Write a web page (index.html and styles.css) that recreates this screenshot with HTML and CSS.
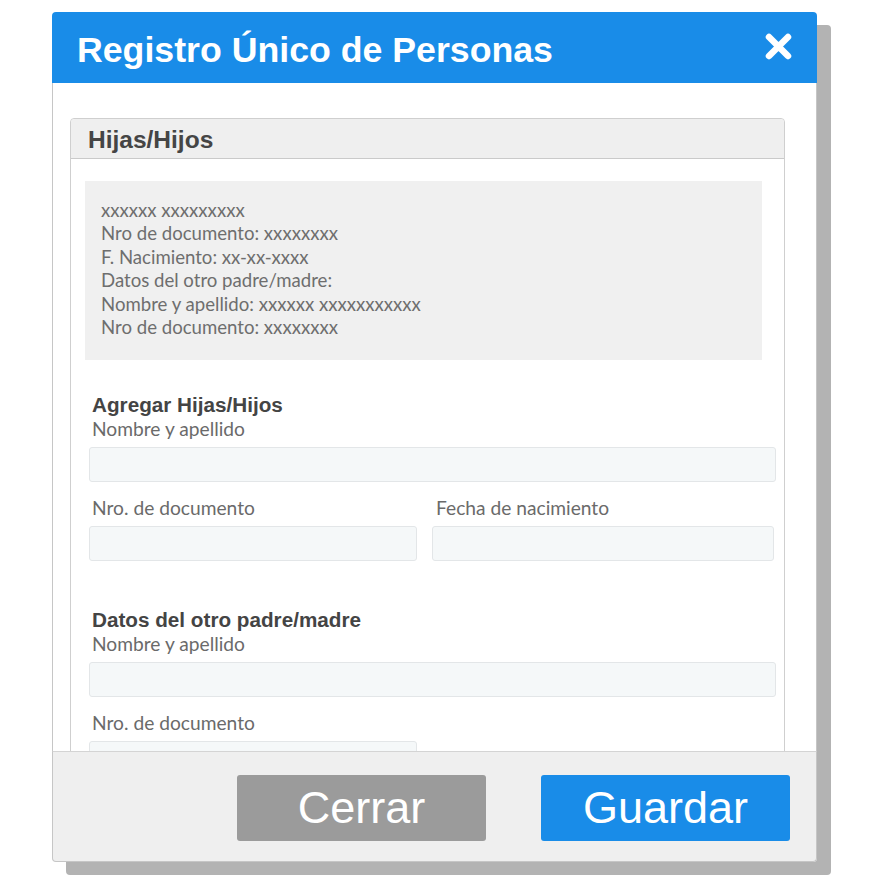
FILE: index.html
```html
<!DOCTYPE html>
<html lang="es">
<head>
    <meta charset="UTF-8">
    <meta name="viewport" content="width=device-width, initial-scale=1.0">
    <title>Registro Único de Personas</title>
    <link rel="stylesheet" href="styles.css">
</head>
<body>

    <div class="dialog">
        <div class="dialog-header">
            <h1>Registro Único de Personas</h1>
            <button class="close-btn" aria-label="Cerrar">
                <svg width="27" height="27" viewBox="0 0 27 27">
                    <path d="M4 4 L23 23 M23 4 L4 23" stroke="#fff" stroke-width="6.5" stroke-linecap="round" fill="none"/>
                </svg>
            </button>
        </div>

        <div class="dialog-body">
            <div class="panel">
                <div class="panel-head">Hijas/Hijos</div>
                <div class="panel-body">
                    <div class="info-box">
                        xxxxxx xxxxxxxxx<br>
                        Nro de documento: xxxxxxxx<br>
                        F. Nacimiento: xx-xx-xxxx<br>
                        Datos del otro padre/madre:<br>
                        Nombre y apellido: xxxxxx xxxxxxxxxxx<br>
                        Nro de documento: xxxxxxxx
                    </div>

                    <div class="form-section">
                        <h2>Agregar Hijas/Hijos</h2>
                        <label class="field-label">Nombre y apellido</label>
                        <input type="text" class="field">
                        <div class="field-row">
                            <div>
                                <label class="field-label">Nro. de documento</label>
                                <input type="text" class="field">
                            </div>
                            <div class="col-right">
                                <label class="field-label">Fecha de nacimiento</label>
                                <input type="text" class="field">
                            </div>
                        </div>
                    </div>

                    <div class="form-section second">
                        <h2>Datos del otro padre/madre</h2>
                        <label class="field-label">Nombre y apellido</label>
                        <input type="text" class="field">
                        <div class="field-row">
                            <div>
                                <label class="field-label">Nro. de documento</label>
                                <input type="text" class="field">
                            </div>
                        </div>
                    </div>
                </div>
            </div>
        </div>

        <div class="dialog-footer">
            <button class="btn btn-close">Cerrar</button>
            <button class="btn btn-save">Guardar</button>
        </div>
    </div>

</body>
</html>
```

FILE: styles.css
```css
/* General Reset */
* { margin: 0; padding: 0; box-sizing: border-box; }
body {
    font-family: "Liberation Sans", Arial, sans-serif;
    background: #fff;
    width: 895px;
    height: 890px;
    overflow: hidden;
    padding: 12px 0 0 52px;
}
.dialog {
    width: 765px;
    height: 850px;
    display: flex;
    flex-direction: column;
    border-radius: 4px;
    background: #fff;
    box-shadow: 14px 13px 0 #b3b3b3;
}
.dialog-header {
    height: 71px;
    background: #198ce8;
    border-radius: 4px 4px 0 0;
    display: flex;
    align-items: center;
    justify-content: space-between;
    padding: 0 25px 0 25px;
    flex-shrink: 0;
}
.dialog-header h1 {
    color: #fff;
    font-size: 35.7px;
    font-weight: bold;
    margin-top: 6px;
}
.close-btn {
    background: none;
    border: none;
    width: 27px;
    height: 27px;
    margin-bottom: 2px;
    cursor: pointer;
}
.close-btn svg { display: block; }

.dialog-body {
    height: 668px;
    overflow: hidden;
    border-left: 1px solid #c6c6c6;
    border-right: 1px solid #c6c6c6;
    padding: 35px 31px 0 17px;
}
.panel {
    border: 1px solid #cfcfcf;
    border-radius: 4px 4px 0 0;
    min-height: 700px;
}
.panel-head {
    height: 40px;
    background: #efefef;
    border-bottom: 1px solid #cacaca;
    border-radius: 4px 4px 0 0;
    padding: 2px 0 0 17px;
    font-size: 24.5px;
    font-weight: bold;
    color: #454545;
    line-height: 37px;
}
.panel-body { padding: 22px 8px 0 14px; }

.info-box {
    background: #f0f0f0;
    margin-right: 14px;
    height: 179px;
    padding: 18px 0 0 16px;
    font-family: Lato, "Open Sans", sans-serif;
    font-size: 18.6px;
    line-height: 23.4px;
    color: #6e6e6e;
}

.form-section { padding-left: 4px; margin-top: 33px; }
.form-section.second { margin-top: 47px; }
.form-section h2 {
    font-size: 20.7px;
    line-height: 24px;
    color: #444;
    padding-left: 3px;
}
.field-label {
    display: block;
    font-family: Lato, "Open Sans", sans-serif;
    font-size: 19.2px;
    line-height: 24px;
    color: #6a6a6a;
    padding-left: 3px;
    margin-bottom: 6px;
}
.field {
    display: block;
    width: 100%;
    height: 35px;
    background: #f5f8f9;
    border: 1px solid #e3e6e8;
    border-radius: 3px;
}
.field-row {
    display: grid;
    grid-template-columns: 328px 1fr;
    gap: 15px;
    margin-top: 14px;
}
.field-row .col-right { margin-right: 2px; }
.field-row .col-right .field-label { padding-left: 4px; }

.dialog-footer {
    flex: 1;
    background: #efefef;
    border: 1px solid #c6c6c6;
    border-top-color: #d4d4d4;
    border-radius: 0 0 4px 4px;
    display: flex;
    justify-content: flex-end;
    align-items: flex-start;
    gap: 55px;
    padding: 23px 26px 0 0;
}
.btn {
    width: 249px;
    height: 66px;
    border: none;
    border-radius: 3px;
    color: #fff;
    font-family: "Liberation Sans", Arial, sans-serif;
    font-size: 45px;
    cursor: pointer;
}
.btn-close { background: #9b9b9b; }
.btn-save { background: #198ce8; }
```
